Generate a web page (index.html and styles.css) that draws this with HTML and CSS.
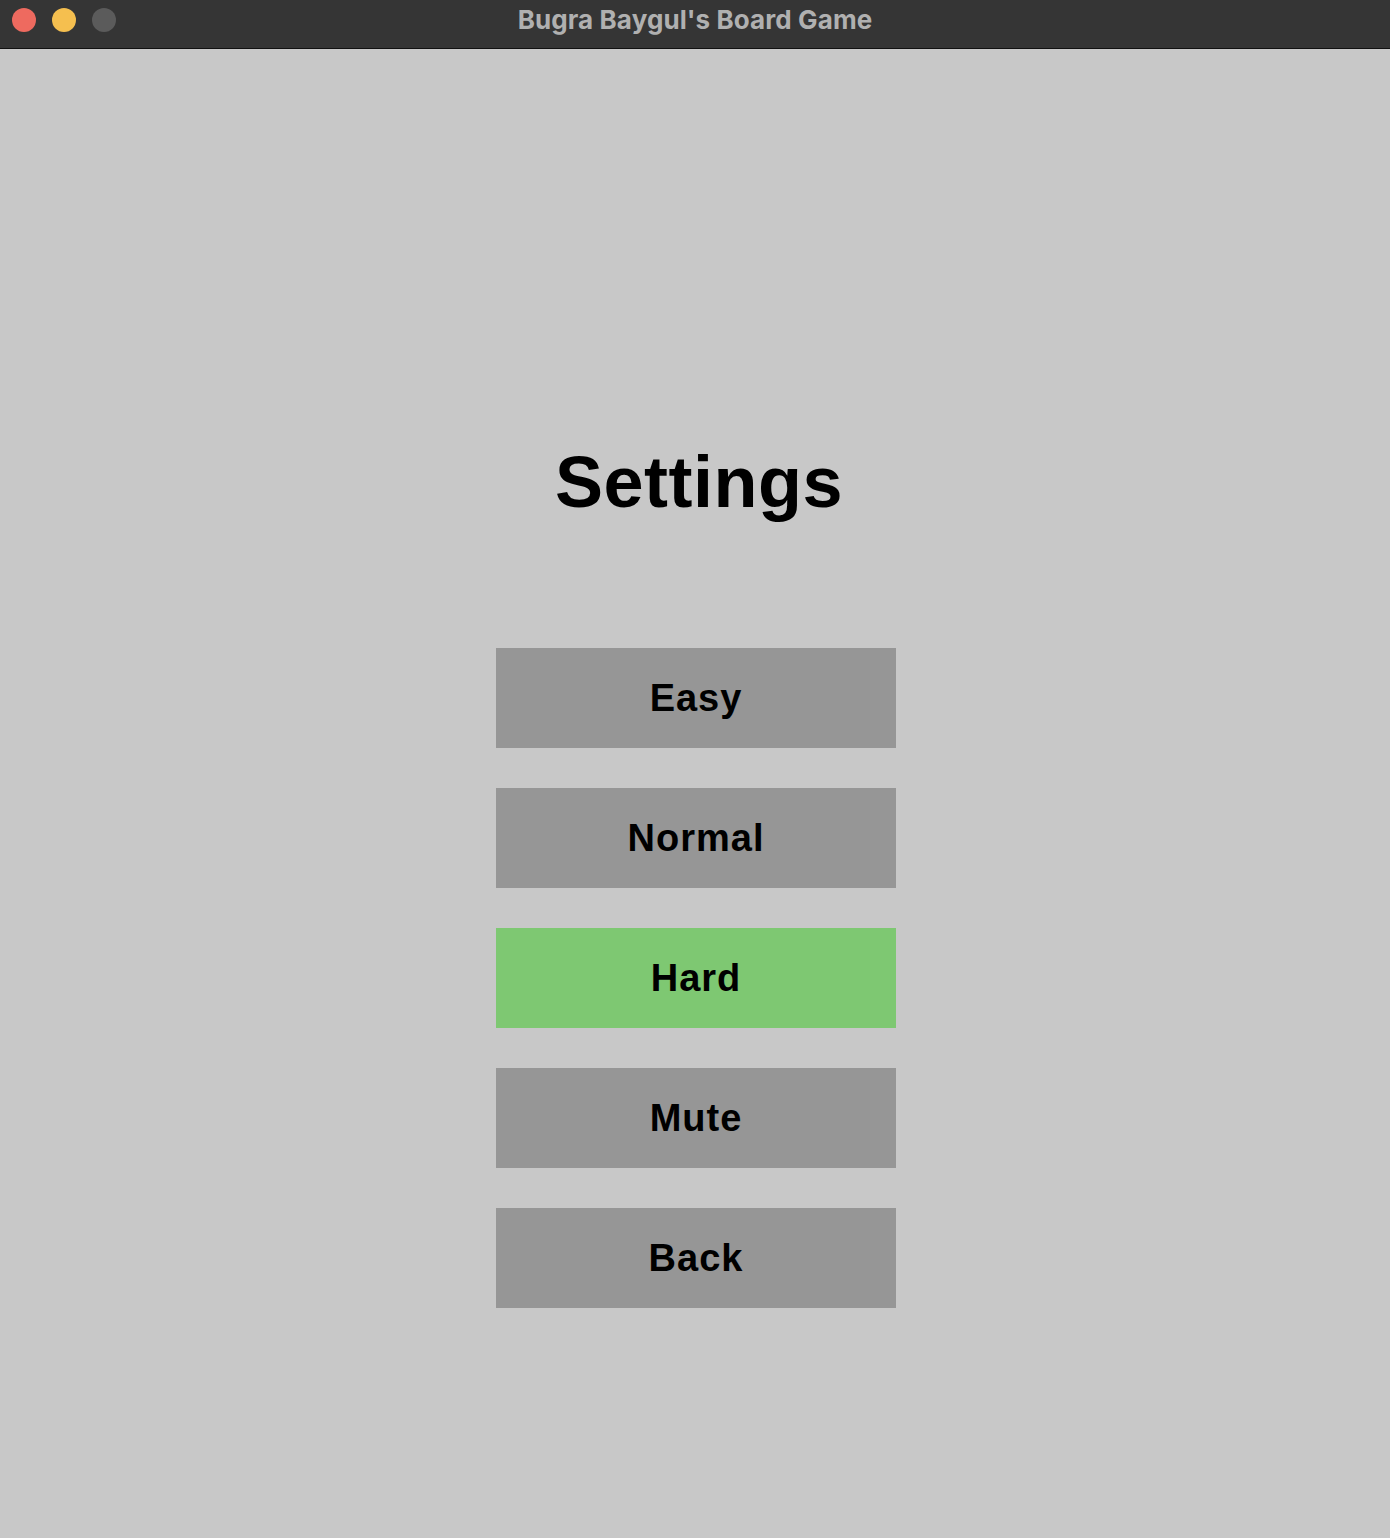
FILE: index.html
```html
<!DOCTYPE html>
<html>
<head>
<meta charset="utf-8">
<title>Bugra Baygul's Board Game</title>
<link rel="stylesheet" href="styles.css">
</head>
<body>
<div class="window">
  <header class="titlebar">
    <div class="lights">
      <span class="light red"></span>
      <span class="light yellow"></span>
      <span class="light gray"></span>
    </div>
    <div class="title">Bugra Baygul's Board Game</div>
  </header>
  <main class="content">
    <h1 class="heading">Settings</h1>
    <div class="menu">
      <div class="btn">Easy</div>
      <div class="btn">Normal</div>
      <div class="btn active">Hard</div>
      <div class="btn">Mute</div>
      <div class="btn">Back</div>
    </div>
  </main>
</div>
</body>
</html>
```
FILE: styles.css
```css
html, body {
  margin: 0;
  padding: 0;
  width: 1390px;
  height: 1538px;
  overflow: hidden;
  background: #c8c8c8;
}
.window {
  display: flex;
  flex-direction: column;
  height: 1538px;
}
.titlebar {
  position: relative;
  height: 48px;
  background: #353535;
  border-bottom: 1px solid #111;
  display: flex;
  align-items: center;
  justify-content: center;
  flex-shrink: 0;
}
.lights {
  position: absolute;
  left: 12px;
  top: 8px;
  display: flex;
  gap: 16px;
}
.light {
  width: 24px;
  height: 24px;
  border-radius: 50%;
  display: block;
}
.red { background: #ee6a5f; }
.yellow { background: #f5bf4f; }
.gray { background: #5b5b5b; }
.title {
  font-family: Inter, "Liberation Sans", sans-serif;
  font-weight: 700;
  font-size: 26px;
  letter-spacing: 0.1px;
  color: #b0b0b0;
  margin-top: -10px;
}
.content {
  flex: 1;
  background: #c8c8c8;
  display: flex;
  flex-direction: column;
  align-items: center;
  padding-top: 397px;
  padding-left: 2px;
}
.heading {
  margin: 0;
  font-family: "Liberation Sans", Arial, sans-serif;
  font-weight: bold;
  font-size: 72px;
  line-height: 72px;
  color: #000;
  margin-left: 6px;
  letter-spacing: 0.5px;
}
.menu {
  margin-top: 130px;
  display: flex;
  flex-direction: column;
  gap: 40px;
}
.btn {
  width: 400px;
  height: 100px;
  background: #969696;
  text-align: center;
  font-family: "Liberation Sans", Arial, sans-serif;
  font-weight: bold;
  font-size: 38px;
  line-height: 100px;
  color: #000;
  letter-spacing: 1px;
}
.btn.active {
  background: #7ec872;
}
```
